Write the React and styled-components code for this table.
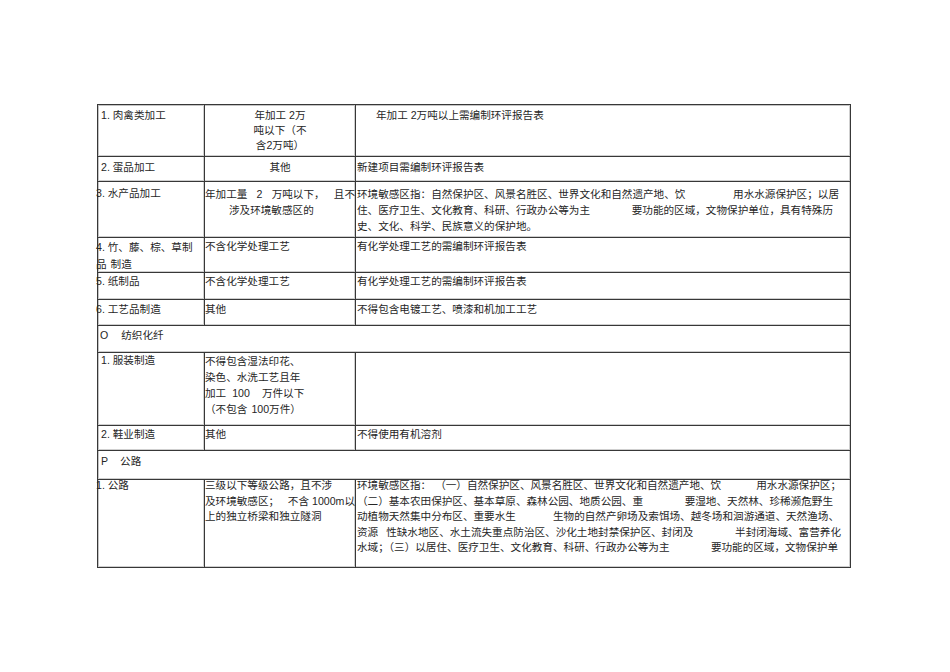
import React from "react";
import styled, { createGlobalStyle } from "styled-components";

const Global = createGlobalStyle`
  html, body { margin: 0; padding: 0; background: #ffffff; }
  body {
    font-family: "Liberation Sans", "Noto Sans CJK SC", sans-serif;
    font-size: 10.6px;
    color: #262626;
  }
`;

const Page = styled.div`
  width: 950px;
  height: 672px;
  box-sizing: border-box;
  padding: 104px 0 0 97px;
`;

const Table = styled.div`
  display: grid;
  grid-template-columns: 107px 151px 495px;
  grid-template-rows: 52px 25px 56px 35px 27px 26px 27px 73px 25px 29px 88px;
  width: 754px;
  box-sizing: border-box;
  border-top: 1px solid #383838;
  border-left: 1px solid #383838;
  box-shadow: inset 0 1px 0 #c4c4c4, inset 1px 0 0 #c4c4c4;
`;

const Cell = styled.div`
  box-sizing: border-box;
  border-right: 1px solid #383838;
  border-bottom: 1px solid #383838;
  box-shadow: inset -1px 0 0 #cfcfcf, inset 0 -1px 0 #cfcfcf;
  grid-column: span ${(p) => p.$span || 1};
  padding-left: ${(p) => p.$pl ?? 0}px;
  text-align: ${(p) => (p.$center ? "center" : "left")};
  overflow: visible;
  min-width: 0;
`;

const Text = styled.div`
  margin-top: ${(p) => p.$mt ?? 2}px;
  margin-left: ${(p) => (p.$flush ? -2 : 0)}px;
  line-height: ${(p) => p.$lh ?? 15.6}px;
  white-space: nowrap;
`;

const Line = styled.div`
  display: flex;
  justify-content: ${(p) => p.$justify || "flex-start"};
  width: ${(p) => (p.$w ? `${p.$w}px` : "auto")};
  padding-left: ${(p) => p.$pl ?? 0}px;
  white-space: nowrap;
`;

const Push = styled.span`
  margin-left: auto;
`;

const Gap = styled.span`
  display: inline-block;
  flex: none;
  width: ${(p) => p.$w}px;
`;

export default function App() {
  return (
    <>
      <Global />
      <Page>
        <Table>
          {/* Row 1 */}
          <Cell $pl={3}>
            <Text $mt={3}>1. 肉禽类加工</Text>
          </Cell>
          <Cell>
            <Text $mt={3} $lh={14.8}>
              <Line $justify="center">年加工 2万</Line>
              <Line $justify="center">吨以下（不</Line>
              <Line $justify="center">含2万吨）</Line>
            </Text>
          </Cell>
          <Cell $pl={20}>
            <Text $mt={3}>年加工 2万吨以上需编制环评报告表</Text>
          </Cell>

          {/* Row 2 */}
          <Cell $pl={3}>
            <Text $mt={3}>2. 蛋品加工</Text>
          </Cell>
          <Cell $center>
            <Text $mt={3}>其他</Text>
          </Cell>
          <Cell $pl={1}>
            <Text $mt={3}>新建项目需编制环评报告表</Text>
          </Cell>

          {/* Row 3 */}
          <Cell>
            <Text $mt={4} $flush>3. 水产品加工</Text>
          </Cell>
          <Cell>
            <Text $mt={4} $lh={16}>
              <Line $w={150} $justify="space-between">
                <span>年加工量</span>
                <span>2</span>
                <span>万吨以下，</span>
                <span>且不</span>
              </Line>
              <Line $pl={24}>涉及环境敏感区的</Line>
            </Text>
          </Cell>
          <Cell $pl={1}>
            <Text $mt={4} $lh={16}>
              <Line $w={482}>
                <span>环境敏感区指：自然保护区、风景名胜区、世界文化和自然遗产地、饮</span>
                <Push>用水水源保护区；以居</Push>
              </Line>
              <Line $w={476}>
                <span>住、医疗卫生、文化教育、科研、行政办公等为主</span>
                <Push>要功能的区域，文物保护单位，具有特殊历</Push>
              </Line>
              <Line>史、文化、科学、民族意义的保护地。</Line>
            </Text>
          </Cell>

          {/* Row 4 */}
          <Cell>
            <Text $mt={1} $flush $lh={17}>
              <Line>4. 竹、藤、棕、草制</Line>
              <Line>
                品<Gap $w={4} />制造
              </Line>
            </Text>
          </Cell>
          <Cell>
            <Text $mt={1}>不含化学处理工艺</Text>
          </Cell>
          <Cell $pl={1}>
            <Text $mt={1}>有化学处理工艺的需编制环评报告表</Text>
          </Cell>

          {/* Row 5 */}
          <Cell>
            <Text $mt={1} $flush>5. 纸制品</Text>
          </Cell>
          <Cell>
            <Text $mt={1}>不含化学处理工艺</Text>
          </Cell>
          <Cell $pl={1}>
            <Text $mt={1}>有化学处理工艺的需编制环评报告表</Text>
          </Cell>

          {/* Row 6 */}
          <Cell>
            <Text $mt={2} $flush>6. 工艺品制造</Text>
          </Cell>
          <Cell>
            <Text $mt={2}>其他</Text>
          </Cell>
          <Cell $pl={1}>
            <Text $mt={2}>不得包含电镀工艺、喷漆和机加工工艺</Text>
          </Cell>

          {/* Section O */}
          <Cell $span={3} $pl={2}>
            <Text $mt={2}>
              <Line>
                O<Gap $w={13} />纺织化纤
              </Line>
            </Text>
          </Cell>

          {/* 服装制造 */}
          <Cell $pl={3}>
            <Text $mt={0}>1. 服装制造</Text>
          </Cell>
          <Cell>
            <Text $mt={0} $lh={16}>
              <Line>不得包含湿法印花、</Line>
              <Line>染色、水洗工艺且年</Line>
              <Line>
                加工<Gap $w={6} />100<Gap $w={12} />万件以下
              </Line>
              <Line>
                （不包含<Gap $w={4} />100万件）
              </Line>
            </Text>
          </Cell>
          <Cell />

          {/* 鞋业制造 */}
          <Cell $pl={3}>
            <Text $mt={1}>2. 鞋业制造</Text>
          </Cell>
          <Cell>
            <Text $mt={1}>其他</Text>
          </Cell>
          <Cell $pl={1}>
            <Text $mt={1}>不得使用有机溶剂</Text>
          </Cell>

          {/* Section P */}
          <Cell $span={3} $pl={3}>
            <Text $mt={3}>
              <Line>
                P<Gap $w={12} />公路
              </Line>
            </Text>
          </Cell>

          {/* 公路 */}
          <Cell>
            <Text $mt={-2} $flush>1. 公路</Text>
          </Cell>
          <Cell>
            <Text $mt={-2}>
              <Line>三级以下等级公路，且不涉</Line>
              <Line $w={150}>
                <span>及环境敏感区；</span>
                <Push>
                  不含<Gap $w={3} />1000m以
                </Push>
              </Line>
              <Line>上的独立桥梁和独立隧洞</Line>
            </Text>
          </Cell>
          <Cell $pl={1}>
            <Text $mt={-2}>
              <Line $w={484}>
                <span>环境敏感区指：</span>
                <Gap $w={4} />
                <span>（一）自然保护区、风景名胜区、世界文化和自然遗产地、饮</span>
                <Push>用水水源保护区；</Push>
              </Line>
              <Line $w={476}>
                <span>（二）基本农田保护区、基本草原、森林公园、地质公园、重</span>
                <Push>要湿地、天然林、珍稀濒危野生</Push>
              </Line>
              <Line $w={482}>
                <span>动植物天然集中分布区、重要水生</span>
                <Push>生物的自然产卵场及索饵场、越冬场和洄游通道、天然渔场、</Push>
              </Line>
              <Line $w={484}>
                <span>资源</span>
                <Gap $w={8} />
                <span>性缺水地区、水土流失重点防治区、沙化土地封禁保护区、封闭及</span>
                <Push>半封闭海域、富营养化</Push>
              </Line>
              <Line $w={481}>
                <span>水域；（三）以居住、医疗卫生、文化教育、科研、行政办公等为主</span>
                <Push>要功能的区域，文物保护单</Push>
              </Line>
            </Text>
          </Cell>
        </Table>
      </Page>
    </>
  );
}
